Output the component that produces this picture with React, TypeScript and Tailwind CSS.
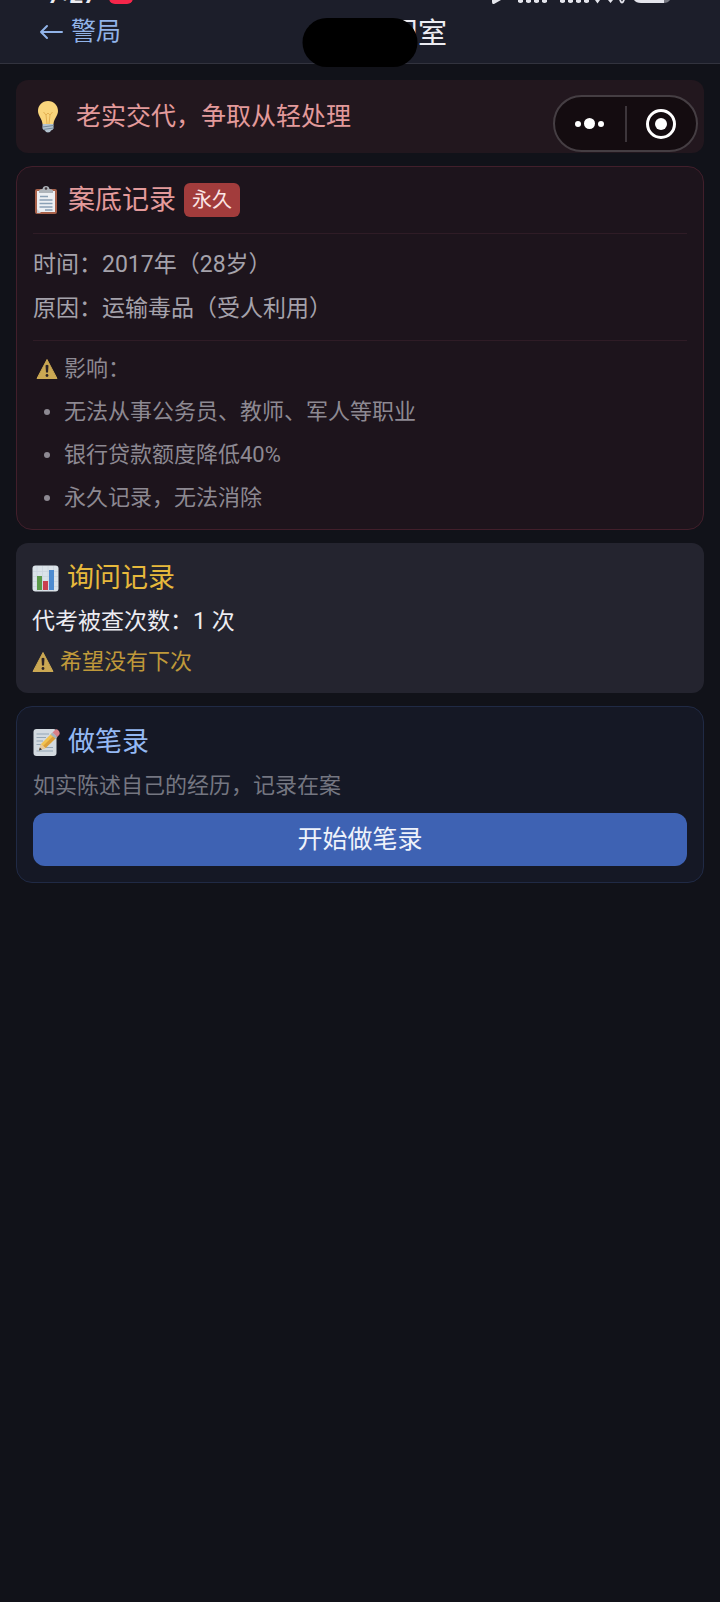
import React, { ReactNode } from "react";
import { twMerge } from "tailwind-merge";

const effects = [
  "无法从事公务员、教师、军人等职业",
  "银行贷款额度降低40%",
  "永久记录，无法消除",
];

export default function App() {
  return (
    <div className="relative min-h-screen bg-[#111219] font-['Roboto','Noto_Sans_CJK_SC',sans-serif] text-[#ececf2]">
      <StatusBar />
      <Header />
      <MiniProgramCapsule />
      <main className="flex flex-col gap-[13px] px-4 pt-4">
        <div className="flex h-[73px] items-center gap-3 rounded-xl bg-[#22171e] px-4">
          <BulbIcon className="h-8 w-8" />
          <p className="text-[25px] leading-[30px] text-[#e39a9b]">
            老实交代，争取从轻处理
          </p>
        </div>

        <Card className="rounded-2xl border border-[#421f2b] bg-[#1d141c]">
          <div className="flex items-center gap-2 border-b border-[#2f1c26] pb-4">
            <ClipboardIcon />
            <h2 className="text-[27px] leading-[34px] text-[#e39a9b]">
              案底记录
            </h2>
            <span className="rounded-md bg-[#a23c3c] px-2 text-xl leading-[34px] text-[#fbe4e4]">
              永久
            </span>
          </div>
          <div className="flex flex-col gap-[14px] border-b border-[#2f1c26] py-4 text-[23px] leading-[30px] text-[#a5a2ab]">
            <p>时间：2017年（28岁）</p>
            <p>原因：运输毒品（受人利用）</p>
          </div>
          <div className="flex flex-col gap-[13px] pt-[13px] text-[22px] leading-[30px] text-[#8d8992]">
            <div className="flex items-center gap-1">
              <span className="flex w-[27px] justify-center">
                <WarningIcon />
              </span>
              <h3>影响：</h3>
            </div>
            <ul className="flex flex-col gap-[13px]">
              {effects.map((effect) => (
                <li key={effect} className="flex items-center gap-1">
                  <span className="flex w-[27px] justify-center">
                    <span className="h-1.5 w-1.5 rounded-full bg-[#8d8992]" />
                  </span>
                  {effect}
                </li>
              ))}
            </ul>
          </div>
        </Card>

        <Card className="flex flex-col gap-[10px] bg-[#24242f]">
          <div className="flex items-center gap-2">
            <ChartIcon />
            <h2 className="text-[27px] leading-[38px] text-[#e7b93c]">
              询问记录
            </h2>
          </div>
          <p className="text-[23px] leading-[30px]">代考被查次数：1 次</p>
          <div className="flex items-center gap-[6px] text-[22px] leading-[30px] text-[#bf993a]">
            <WarningIcon />
            <p>希望没有下次</p>
          </div>
        </Card>

        <Card className="rounded-2xl border border-[#202a45] bg-[#151825]">
          <div className="flex items-center gap-2">
            <MemoIcon />
            <h2 className="text-[27px] leading-[38px] text-[#94b9f3]">
              做笔录
            </h2>
          </div>
          <p className="mt-[10px] text-[22px] leading-[30px] text-[#747681]">
            如实陈述自己的经历，记录在案
          </p>
          <button className="mt-3 h-[53px] w-full rounded-xl bg-[#3e62b3] text-[25px] leading-[30px] text-[#eef2fb]">
            开始做笔录
          </button>
        </Card>
      </main>
    </div>
  );
}

const Card = ({
  className,
  children,
}: {
  className?: string;
  children: ReactNode;
}) => {
  return (
    <section className={twMerge("rounded-xl p-4", className)}>
      {children}
    </section>
  );
};

const Header = () => {
  return (
    <header className="relative grid h-16 grid-cols-[1fr_auto_1fr] items-center border-b border-[#32333e] bg-[#1c1e2a] pl-[39px]">
      <a
        href="#station"
        className="flex items-center gap-2 text-[25px] leading-[30px] text-[#91b3e8]"
      >
        <svg width="24" height="24" viewBox="0 0 24 24" fill="none">
          <path
            d="M23 12H2M8 6L2 12L8 18"
            stroke="currentColor"
            strokeWidth="2"
            strokeLinecap="round"
            strokeLinejoin="round"
          />
        </svg>
        警局
      </a>
      <h1 className="flex items-center gap-3 pl-1 pt-1 text-[29px] leading-[36px]">
        <BulbIcon className="h-8 w-8" />
        询问室
      </h1>
      {/* camera cutout */}
      <div className="absolute left-1/2 top-[18px] h-[49px] w-[115px] -translate-x-1/2 rounded-full bg-black" />
    </header>
  );
};

const StatusBar = () => {
  return (
    <div className="absolute inset-x-0 top-0 z-10 flex h-1 items-end justify-between overflow-hidden pl-12 pr-[48px]">
      <div className="flex items-end gap-3">
        <span className="font-['Inter',sans-serif] text-2xl font-semibold leading-[18px]">
          7:27
        </span>
        <span className="h-5 w-6 rounded-md bg-[#f5264a]" />
      </div>
      <svg width="180" height="4" viewBox="0 0 180 4" fill="#e4e5ec">
        <path d="M0 0H9L2 4Q0 4.500 0 2Z" />
        <path d="M26 0h5v2q-2.500 2-5 0ZM34 0h5v2q-2.500 2-5 0ZM42 0h5v2q-2.500 2-5 0ZM50 0h5v2q-2.500 2-5 0Z" />
        <path d="M68 0h5v2q-2.500 2-5 0ZM76 0h5v2q-2.500 2-5 0ZM84 0h5v2q-2.500 2-5 0ZM92 0h5v2q-2.500 2-5 0Z" />
        <path d="M103 0h5l-2.500 3.500ZM116 0h5l-2.500 3Z" />
        <path
          d="M128 0Q130 5 132 0"
          fill="none"
          stroke="#e4e5ec"
          strokeWidth="2"
        />
        <path d="M142 0H172V3H149Q144 3 142 0Z" />
        <path d="M172 0H178Q176 3 172 3Z" fill="#777983" />
      </svg>
    </div>
  );
};

const MiniProgramCapsule = () => {
  return (
    <div className="absolute right-[22px] top-[95px] z-10 flex h-[57px] w-[145px] items-center rounded-full border-2 border-[#453e43] bg-[#140c10]">
      <button
        aria-label="更多"
        className="flex flex-1 items-center justify-center gap-[3px]"
      >
        <span className="h-1.5 w-1.5 rounded-full bg-white" />
        <span className="h-[11px] w-[11px] rounded-full bg-white" />
        <span className="h-1.5 w-1.5 rounded-full bg-white" />
      </button>
      <span className="h-9 w-0.5 bg-[#3d363b]" />
      <button aria-label="关闭" className="flex flex-1 justify-center">
        <svg width="32" height="32" viewBox="0 0 32 32">
          <circle
            cx="16"
            cy="16"
            r="13.500"
            fill="none"
            stroke="#fff"
            strokeWidth="3"
          />
          <circle cx="16" cy="16" r="6" fill="#fff" />
        </svg>
      </button>
    </div>
  );
};

const BulbIcon = ({ className }: { className?: string }) => {
  return (
    <svg viewBox="0 0 32 32" className={className} aria-hidden="true">
      <path
        d="M16 0C10 0 6 4.500 6 10C6 15 10 17.500 10.500 23H21.500C22 17.500 26 15 26 10C26 4.500 22 0 16 0Z"
        fill="#f9d57c"
      />
      <path
        d="M11.500 11L14 14L16 12L18 14L20.500 11M14 14L15 23M18 14L17 23"
        fill="none"
        stroke="#e3b052"
        strokeWidth="1"
      />
      <path
        d="M10.500 23H21.500V27.500Q21 29 19 29.500Q18.500 31.500 16 31.500Q13.500 31.500 13 29.500Q11 29 10.500 27.500Z"
        fill="#b3c3cf"
      />
      <path
        d="M10.500 26L21.500 24.500M11 28.500L21.500 27"
        stroke="#74899b"
        strokeWidth="1"
      />
    </svg>
  );
};

const ClipboardIcon = () => {
  return (
    <svg width="27" height="30" viewBox="0 0 27 30" aria-hidden="true">
      <rect x="2" y="4" width="22" height="25" rx="2" fill="#a9624b" />
      <path d="M4 6H22V27H6L4 25Z" fill="#eceff3" />
      <path d="M4 24L8 28H4Z" fill="#c9ced6" />
      <path
        d="M7 11.500H15M6.500 15H19.500M6.500 18.500H19.500M6.500 22H19.500M12 25H19.500"
        stroke="#8aa0b5"
        strokeWidth="1.300"
      />
      <path
        d="M6 8V5.500Q6.500 4 9.500 4Q10 1 13 1Q16 1 16.500 4Q19.500 4 20 5.500V8Z"
        fill="#aeb4ba"
      />
      <circle cx="13" cy="3.500" r="1.300" fill="#40363c" />
    </svg>
  );
};

const ChartIcon = () => {
  return (
    <svg width="27" height="27" viewBox="0 0 27 27" aria-hidden="true">
      <rect x="0.500" y="0.500" width="26" height="26" rx="3" fill="#dbe3e9" />
      <path
        d="M1 6.500H26M1 11.500H26M1 16.500H26M1 21.500H26M5 1V26M10.500 1V26M16 1V26M21.500 1V26"
        stroke="#cbd6de"
        strokeWidth="0.800"
      />
      <rect x="5" y="11" width="5" height="14" fill="#5b9a49" />
      <rect x="11" y="16" width="5" height="9" fill="#c9404e" />
      <rect x="17" y="5" width="5" height="20" fill="#4d8bd0" />
    </svg>
  );
};

const MemoIcon = () => {
  return (
    <svg width="27" height="28" viewBox="0 0 27 28" aria-hidden="true">
      <rect x="0.500" y="1" width="23" height="27" rx="3" fill="#d3dae0" />
      <path
        d="M3.500 6H16M3.500 9.500H13M3.500 13H10M3.500 16.500H8M12 19.500H20M3.500 23H20"
        stroke="#94a6b5"
        strokeWidth="1.200"
      />
      <path d="M6 22.500L8 16L19 5L23.500 9.500L12.500 20Z" fill="#f2c24e" />
      <path d="M10 18L21 7.200L23.500 9.500L12.500 20Z" fill="#dc9f38" />
      <path d="M6 22.500L8 16L12.500 20Z" fill="#e6c79a" />
      <path d="M6 22.500L6.800 19.500L9 21.500Z" fill="#34343c" />
      <path d="M17.500 6.500L19.500 4.500L24.500 9L22.500 10.800Z" fill="#a4b2bd" />
      <path
        d="M19.500 4.500L22 2Q23.500 0.500 25.300 2.300Q27.500 4.500 26.300 6.800L24.300 9Z"
        fill="#d98087"
      />
    </svg>
  );
};

const WarningIcon = () => {
  return (
    <svg width="22" height="22" viewBox="0 0 22 22" aria-hidden="true">
      <path
        d="M11 1.500L21 20.500H1Z"
        fill="#cba853"
        stroke="#cba853"
        strokeWidth="1"
        strokeLinejoin="round"
      />
      <path d="M9.500 7.500Q11 6 12.500 7.500L12 14.500H10Z" fill="#2b2226" />
      <circle cx="11" cy="17.500" r="1.400" fill="#2b2226" />
    </svg>
  );
};
